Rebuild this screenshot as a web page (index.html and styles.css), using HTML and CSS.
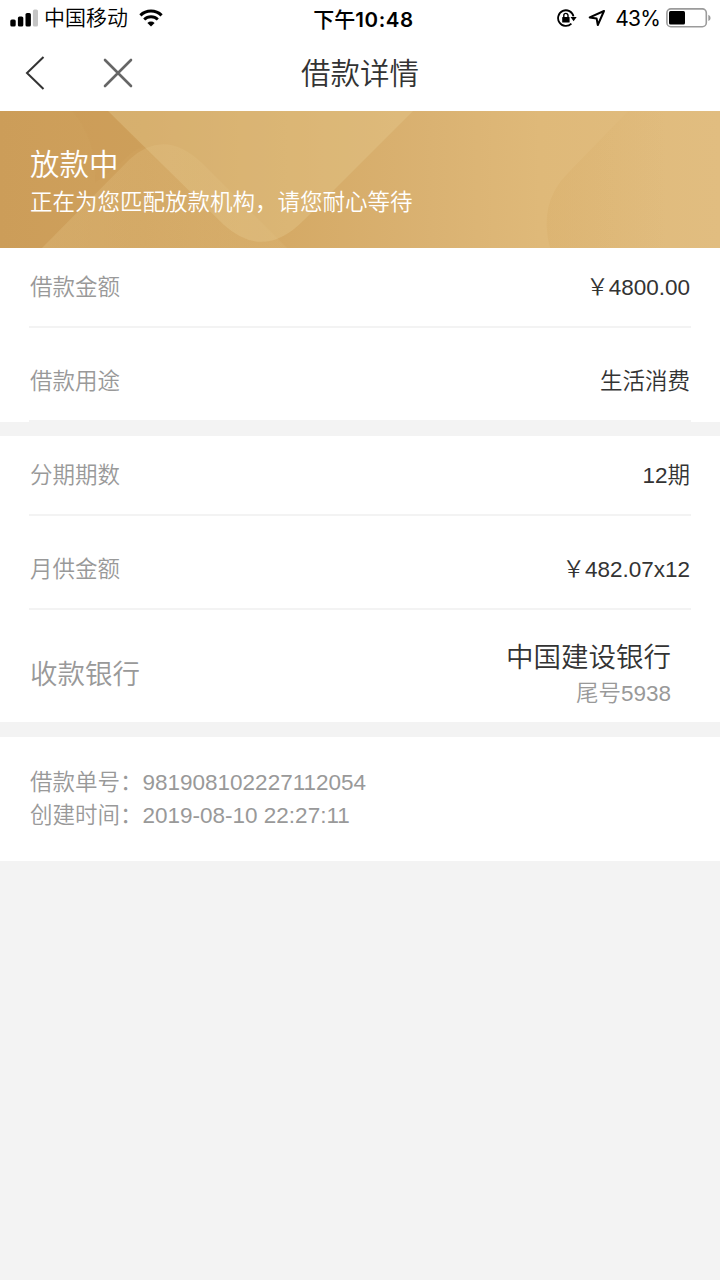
FILE: index.html
```html
<!DOCTYPE html>
<html lang="zh-CN">
<head>
    <meta charset="UTF-8">
    <meta name="viewport" content="width=device-width, initial-scale=1.0">
    <title>借款详情</title>
    <link rel="stylesheet" href="styles.css">
</head>
<body>
    <div class="status-bar">
        <div class="status-left">
            <svg class="signal" width="28" height="18" viewBox="0 0 28 18">
                <rect x="0.3" y="10.5" width="5.4" height="7" rx="1.6"/>
                <rect x="7.9" y="7.5" width="5.4" height="10" rx="1.6"/>
                <rect x="15.5" y="4" width="5.4" height="13.5" rx="1.6"/>
                <rect x="22.9" y="0.5" width="5.1" height="17" rx="1.6" fill="#c4c4c4"/>
            </svg>
            <span class="carrier">中国移动</span>
            <svg class="wifi" width="24" height="18" viewBox="0 0 24 18">
                <path d="M1.4 6.3a15.4 15.4 0 0 1 21.2 0" fill="none" stroke="#000" stroke-width="3.1"/>
                <path d="M5.2 10.5a9.8 9.8 0 0 1 13.6 0" fill="none" stroke="#000" stroke-width="2.9"/>
                <path d="M12 17.4L8.4 13.9a5.2 5.2 0 0 1 7.2 0z"/>
            </svg>
        </div>
        <div class="time">下午<span class="digits">10:48</span></div>
        <div class="status-right">
            <svg class="lock" width="20" height="18" viewBox="0 0 20 18">
                <path d="M14.4 14.6A7.8 7.8 0 1 1 16.5 7.4" fill="none" stroke="#000" stroke-width="1.8"/>
                <path d="M13.5 8h6.2l-3.1 4.2z"/>
                <rect x="5.2" y="7.9" width="7.4" height="5.6" rx="0.6"/>
                <path d="M6.8 8.4V6.5a2.1 2.1 0 0 1 4.2 0v1.9" fill="none" stroke="#000" stroke-width="1.4"/>
            </svg>
            <svg class="arrow" width="18" height="18" viewBox="0 0 18 18">
                <path d="M16 2L1.7 8.4l6.9 1L9.8 16z" fill="none" stroke="#000" stroke-width="2" stroke-linejoin="round"/>
            </svg>
            <span class="percent">43%</span>
            <svg class="battery" width="45" height="20" viewBox="0 0 45 20">
                <rect x="0.9" y="0.9" width="39.4" height="17.8" rx="4" fill="#fff" stroke="#9b9b9b" stroke-width="1.6"/>
                <rect x="3" y="3" width="16" height="13.6" rx="1.5"/>
                <path d="M42.3 6.7q2.3 1 2.3 3.2t-2.3 3.2z" fill="#9b9b9b"/>
            </svg>
        </div>
    </div>

    <div class="nav">
        <svg class="back" width="24" height="36" viewBox="0 0 24 36">
            <path d="M20.5 2L4 18l16.5 16" fill="none" stroke="#333" stroke-width="2"/>
        </svg>
        <svg class="close" width="30" height="30" viewBox="0 0 30 30">
            <path d="M2 2l26 26M28 2L2 28" fill="none" stroke="#666" stroke-width="2.6" stroke-linecap="round"/>
        </svg>
        <h1 class="nav-title">借款详情</h1>
    </div>

    <div class="banner">
        <svg class="banner-bg" width="720" height="137" viewBox="0 0 720 137">
            <defs>
                <linearGradient id="gold" gradientUnits="userSpaceOnUse" x1="0" y1="0" x2="720" y2="0">
                    <stop offset="0" stop-color="#cc9d59"/>
                    <stop offset="0.2" stop-color="#cfa15c"/>
                    <stop offset="0.4" stop-color="#d5aa66"/>
                    <stop offset="0.6" stop-color="#dab272"/>
                    <stop offset="0.75" stop-color="#dfb979"/>
                    <stop offset="1" stop-color="#e1bd80"/>
                </linearGradient>
                <linearGradient id="hill" gradientUnits="userSpaceOnUse" x1="42" y1="0" x2="287" y2="0">
                    <stop offset="0" stop-color="#e6c88c" stop-opacity="0.28"/>
                    <stop offset="1" stop-color="#e6c88c" stop-opacity="0.14"/>
                </linearGradient>
                <linearGradient id="shade" gradientUnits="userSpaceOnUse" x1="540" y1="0" x2="720" y2="0">
                    <stop offset="0" stop-color="#d2a35a" stop-opacity="0.22"/>
                    <stop offset="0.7" stop-color="#d2a35a" stop-opacity="0"/>
                </linearGradient>
            </defs>
            <rect width="720" height="137" fill="url(#gold)"/>
            <path d="M72 0h36l35 36q-10 3-20 14l-28 22q2-44-23-72z" fill="#c4924c" opacity="0.1"/>
            <path d="M108 0H413L304 109Q264 150 224 114z" fill="#e9cc92" opacity="0.34"/>
            <path d="M42 137L130 48Q165 16 203 53L287 137z" fill="url(#hill)"/>
            <path d="M628 0L568 62Q538 92 550 137H720V0z" fill="url(#shade)"/>
        </svg>
        <div class="banner-title">放款中</div>
        <div class="banner-text">正在为您匹配放款机构，请您耐心等待</div>
    </div>

    <div class="section loan">
        <div class="row">
            <span class="label">借款金额</span>
            <span class="value">￥4800.00</span>
        </div>
        <div class="row">
            <span class="label">借款用途</span>
            <span class="value">生活消费</span>
        </div>
    </div>

    <div class="section">
        <div class="row">
            <span class="label">分期期数</span>
            <span class="value">12期</span>
        </div>
        <div class="row">
            <span class="label">月供金额</span>
            <span class="value">￥482.07x12</span>
        </div>
        <div class="bank">
            <span class="bank-label">收款银行</span>
            <div class="bank-info">
                <div class="bank-name">中国建设银行</div>
                <div class="bank-card">尾号5938</div>
            </div>
        </div>
    </div>

    <div class="section order">
        <div>借款单号：981908102227112054</div>
        <div>创建时间：2019-08-10 22:27:11</div>
    </div>
</body>
</html>
```
FILE: styles.css
```css
* {
    box-sizing: border-box;
}

body {
    font-family: "Liberation Sans", "Noto Sans CJK SC DemiLight", "Noto Sans CJK SC", sans-serif;
    font-size: 22.5px;
    font-weight: 350;
    color: #333;
    background-color: #f3f3f3;
    margin: 0;
}

svg {
    display: block;
    flex-shrink: 0;
}

.status-bar {
    display: grid;
    grid-template-columns: 1fr auto 1fr;
    height: 36px;
    padding: 0 9px 0 10px;
    color: #000;
    background: #fff;
}

.status-left,
.status-right {
    display: flex;
    align-items: center;
    height: 36px;
}

.status-right {
    justify-content: flex-end;
}

.carrier {
    font-size: 21px;
    font-weight: 400;
    line-height: 38px;
    margin: 0 11px 0 6px;
}

.time {
    font-family: "Noto Sans CJK SC", sans-serif;
    font-size: 21px;
    font-weight: 500;
    line-height: 36px;
    padding-left: 6px;
}

.digits {
    font-family: Inter, sans-serif;
    font-size: 20.5px;
    font-weight: 600;
    letter-spacing: 0.6px;
}

.lock {
    margin-right: 11px;
}

.arrow {
    margin-right: 9px;
}

.percent {
    font-family: Inter, sans-serif;
    font-size: 21px;
    font-weight: 400;
    letter-spacing: -0.8px;
    margin-right: 6px;
}

.nav {
    position: relative;
    display: flex;
    align-items: center;
    height: 75px;
    padding: 0 0 2px 23px;
    background: #fff;
}

.close {
    margin-left: 56px;
}

.nav-title {
    position: absolute;
    top: 0;
    left: 0;
    right: 0;
    margin: 0;
    font-size: 29.5px;
    font-weight: 350;
    line-height: 75px;
    text-align: center;
    pointer-events: none;
}

.banner {
    position: relative;
    height: 137px;
    padding: 34px 30px 0;
    color: #fff;
}

.banner-bg {
    position: absolute;
    top: 0;
    left: 0;
}

.banner-title,
.banner-text {
    position: relative;
}

.banner-title {
    font-size: 29.5px;
    line-height: 40px;
}

.banner-text {
    line-height: 35px;
}

.section {
    background: #fff;
    margin-bottom: 15px;
}

.loan {
    margin-bottom: 14px;
}

.row {
    display: flex;
    justify-content: space-between;
    height: 80px;
    margin: 0 29px;
    padding: 0 1px;
    line-height: 79px;
    border-bottom: 2px solid #f3f3f3;
}

.row + .row {
    height: 94px;
    padding-top: 14px;
}

.label {
    color: #999;
}

.bank {
    display: flex;
    justify-content: space-between;
    height: 112px;
    padding: 28px 49px 0 30px;
}

.bank-label {
    font-size: 27.5px;
    line-height: 74px;
    color: #999;
}

.bank-info {
    text-align: right;
}

.bank-name {
    font-size: 27.5px;
    line-height: 40px;
}

.bank-card {
    line-height: 32px;
    color: #999;
}

.order {
    height: 124px;
    padding: 29px 30px;
    line-height: 33px;
    color: #999;
}
```
